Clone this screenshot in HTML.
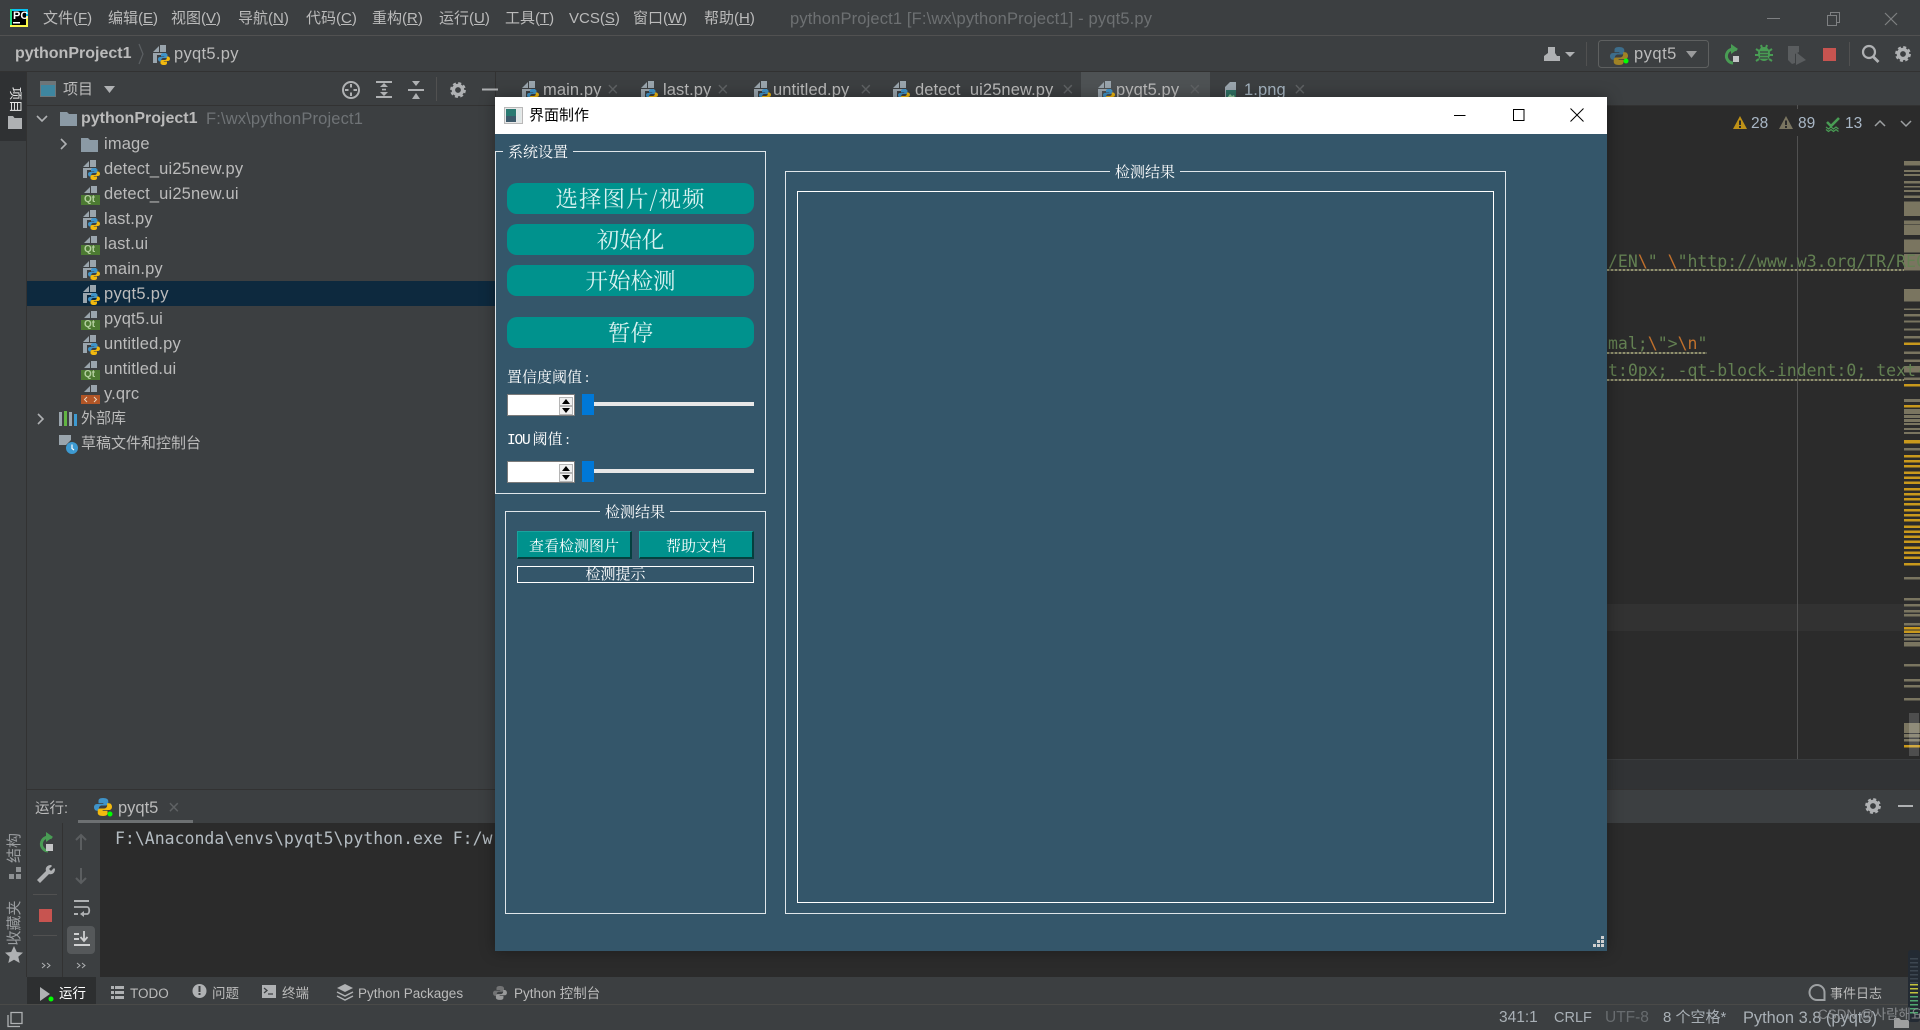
<!DOCTYPE html>
<html lang="zh">
<head>
<meta charset="utf-8">
<title>pyqt5.py</title>
<style>
html,body{margin:0;padding:0;width:1920px;height:1030px;overflow:hidden;background:#3c3f41}
body{position:relative;font-family:"Liberation Sans","Noto Sans CJK SC",sans-serif;color:#bbb}
.b{position:absolute}
.t{position:absolute;white-space:nowrap;line-height:20px;height:20px}
u{text-decoration:underline;text-underline-offset:1px}
.m{font-size:15px;top:9px}
.tree{font-size:16.5px;letter-spacing:.15px;left:104px}
.tab{font-size:16.5px;top:80px;letter-spacing:.1px}
.x{font-size:20px;top:80px;color:#5f6264;font-weight:normal}
.bt{font-size:13.5px;top:984px}
.st{font-size:15.5px;top:1008px;color:#a9b0b6}
.code{font-family:"DejaVu Sans Mono","Liberation Mono",monospace;font-size:16.5px;color:#638052;left:1608px}
.code i{font-style:normal;color:#c0702c}
.wave{position:absolute;height:2px;background:repeating-linear-gradient(90deg,#92926e 0 2px,#55554a 2px 4px)}
#win{position:absolute;left:495px;top:97px;width:1112px;height:854px;background:#34566a;box-shadow:0 0 14px rgba(0,0,0,.35);z-index:5;font-family:"Liberation Serif","Noto Serif CJK SC",serif;color:#fff}
#win .g{position:absolute;border:1px solid #dfe6ea;box-sizing:border-box}
#win .lg{position:absolute;background:#34566a;font-size:15px;line-height:20px;height:20px;padding:0 5px;white-space:nowrap;font-family:"Noto Serif CJK SC",serif;text-align:center}
#win .pb{position:absolute;left:12px;width:247px;height:31px;border-radius:10px;background:#00928d;color:#d8f2f0;font-size:22.5px;line-height:30px;text-align:center;font-family:"Noto Serif CJK SC",serif;white-space:nowrap}
#win .qb{position:absolute;top:434px;height:28px;box-sizing:border-box;width:115px;background:#00928d;border:1px solid #1aa39e;border-right:2px solid #05403f;border-bottom:2px solid #05403f;font-size:15px;line-height:27px;text-align:center;font-family:"Noto Serif CJK SC",serif}
#win .lb{position:absolute;left:12px;font-size:15px;line-height:20px;white-space:nowrap;font-family:"Liberation Serif","Noto Serif CJK SC",serif}
#win .lb em{font-style:normal;margin-left:3px}
#win .lb tt{font-family:"Liberation Mono",monospace;font-size:14.5px;letter-spacing:-1.2px;margin-right:3px}
#win .sp{position:absolute;left:12px;width:68px;height:22px;box-sizing:border-box;background:#fff;border:1px solid #7a7a7a}
#win .sp b{position:absolute;left:51px;width:14px;height:9px;background:#f0f0f0;border:1px solid #b5b5b5;box-sizing:border-box}
#win .sp b:after{content:"";position:absolute;left:2px;width:0;height:0;border-left:4px solid transparent;border-right:4px solid transparent}
#win .sp b.u:after{top:1px;border-bottom:5px solid #000}
#win .sp b.d:after{top:1px;border-top:5px solid #000}
#win .hd{position:absolute;left:87px;width:12px;height:21px;background:#0078d7}
#win .tr{position:absolute;left:99px;width:160px;height:4px;background:#e7e7e7}
</style>
</head>
<body>
<!-- IDE zones -->
<div class="b" style="left:0;top:0;width:1920px;height:36px;background:#3c3f41;border-bottom:1px solid #515151;box-sizing:border-box"></div>
<div class="b" style="left:0;top:71px;width:1920px;height:1px;background:#323232"></div>
<div class="b" style="left:0;top:72px;width:27px;height:69px;background:#2f3133"></div>
<div class="b" style="left:26px;top:72px;width:1px;height:905px;background:#323232"></div>
<div class="b" style="left:27px;top:105px;width:1893px;height:1px;background:#323232"></div>
<div class="b" style="left:495px;top:72px;width:1px;height:718px;background:#323232"></div>
<div class="b" style="left:496px;top:106px;width:1424px;height:653px;background:#2b2b2b"></div>
<div class="b" style="left:1081px;top:72px;width:129px;height:33px;background:#4e5254"></div>
<div class="b" style="left:496px;top:604px;width:1424px;height:27px;background:#323232"></div>
<div class="b" style="left:1797px;top:136px;width:1px;height:623px;background:#515151"></div>
<div class="b" style="left:1797px;top:105px;width:1px;height:4px;background:#515151"></div>
<div class="b" style="left:496px;top:759px;width:1424px;height:31px;background:#313335;border-top:1px solid #3a3c3e;box-sizing:border-box"></div>
<div class="b" style="left:27px;top:281px;width:468px;height:25px;background:#0d293e"></div>
<div class="b" style="left:27px;top:789px;width:1893px;height:1px;background:#323232"></div>
<div class="b" style="left:27px;top:823px;width:1893px;height:154px;background:#2b2b2b"></div>
<div class="b" style="left:27px;top:823px;width:73px;height:154px;background:#3c3f41"></div>
<div class="b" style="left:62px;top:823px;width:1px;height:154px;background:#323232"></div>
<div class="b" style="left:78px;top:820px;width:115px;height:3px;background:#6d7072"></div>
<div class="b" style="left:0;top:977px;width:1920px;height:27px;background:#3c3f41"></div>
<div class="b" style="left:27px;top:977px;width:69px;height:27px;background:#2d2f30"></div>
<div class="b" style="left:0;top:1004px;width:1920px;height:1px;background:#4a4a48"></div>
<div class="b" style="left:67px;top:926px;width:28px;height:28px;background:#55585a;border-radius:4px"></div>
<div class="b" style="left:33px;top:894px;width:24px;height:1px;background:#515151"></div>
<div class="b" style="left:33px;top:935px;width:24px;height:1px;background:#515151"></div>

<!-- Icons -->
<svg class="b" style="left:0;top:0" width="1920" height="1030" viewBox="0 0 1920 1030" xmlns="http://www.w3.org/2000/svg">
<defs>
<g id="logo"><path fill="#3f93c8" d="M12 0C7 0 6 2 6 4v3h6.500v1H4C1.500 8 0 10 0 12.200 0 14.800 1.500 17 4 17h2.500v-3.200c0-2 1.700-3.800 3.800-3.800h5.600c1.800 0 3.100-1.400 3.100-3.100V4c0-2-2-4-7-4z"/><path fill="#f2b90f" transform="rotate(180 12 12)" d="M12 0C7 0 6 2 6 4v3h6.500v1H4C1.500 8 0 10 0 12.200 0 14.800 1.500 17 4 17h2.500v-3.200c0-2 1.700-3.800 3.800-3.800h5.600c1.800 0 3.100-1.400 3.100-3.100V4c0-2-2-4-7-4z"/></g>
<g id="py"><path fill="#9aa5ad" d="M0 7l6-6v6zM7 0h6v7H7zM0 8h4v10H0z"/><rect x="4" y="8" width="9" height="2" fill="#9aa5ad"/><use href="#logo" transform="translate(5 8) scale(.5)"/></g>
<g id="doc"><path fill="#9aa5ad" d="M3 8l6-6v6zM10 1h6v7h-6z"/></g>
<g id="gear"><circle cx="0" cy="0" r="4.600" fill="none" stroke="#afb1b3" stroke-width="3.400"/><circle cx="0" cy="0" r="6.800" fill="none" stroke="#afb1b3" stroke-width="2.200" stroke-dasharray="3 2.340"/></g>
<g id="fold"><path fill="#8b9aa5" d="M0 1h7l2 2h8v12H0z"/></g>
<path id="chev" fill="none" stroke="#afb1b3" stroke-width="1.600" d="M-3-5l5 5-5 5"/>
</defs>

<!-- PC logo -->
<rect x="10" y="9" width="18" height="18" fill="#000"/>
<path fill="#21d789" d="M10 9h2v18h-2z"/><path fill="#fcf84a" d="M10 25h18v2H10zM26 16h2v11h-2z"/><path fill="#07c3f2" d="M12 9h16v2H12zM26 9h2v7h-2z"/>
<rect x="13" y="22" width="7" height="1.500" fill="#fff"/>

<!-- breadcrumb chevron -->
<path fill="none" stroke="#5c6063" stroke-width="1.200" d="M139 44l4 10-4 10"/>
<use href="#py" transform="translate(153 45)"/>

<!-- project header icons -->
<rect x="40" y="81" width="16" height="16" fill="#6e7578"/><rect x="41" y="85" width="14" height="11" fill="#3e86a0"/>
<path fill="#afb1b3" d="M104 86h11l-5.500 7z"/>
<circle cx="351" cy="90" r="8" fill="none" stroke="#afb1b3" stroke-width="2"/><path stroke="#afb1b3" stroke-width="2" d="M351 84v3.500M351 92.500v3.500M345 90h3.500M353.500 90h3.500"/>
<path fill="#afb1b3" d="M376 81h16v2h-16zM376 96h16v2h-16zM380 87l4-4 4 4zM380 92l4 4 4-4zM382 88.800h4v1.600h-4z"/>
<path fill="#afb1b3" d="M408 89h16v2h-16zM412 81l4 5 4-5zM412 99l4-6 4 6z"/>
<rect x="436" y="77" width="1" height="24" fill="#515151"/>
<use href="#gear" transform="translate(458 90)"/>
<rect x="482" y="88.500" width="16" height="2" fill="#afb1b3"/>

<!-- side tool strip -->
<path fill="#afb1b3" d="M8 116h5l1.500 2H22v11H8z"/>
<path fill="#8e9193" d="M16 867h5v5h-5zM9 874h5v5H9zM16 874h5v5h-5z"/>
<path fill="#afb1b3" d="M14 946l2.800 6 6.200.6-4.700 4.200 1.400 6.200-5.700-3.300-5.700 3.300 1.400-6.200L5 952.600l6.200-.6z"/>

<!-- tab icons -->
<use href="#py" transform="translate(522 81)"/>
<use href="#py" transform="translate(641 81)"/>
<use href="#py" transform="translate(754 81)"/>
<use href="#py" transform="translate(893 81)"/>
<use href="#py" transform="translate(1098 81)"/>
<path fill="#9aa5ad" d="M1225 87l5-5h6v17h-11z"/><rect x="1226" y="90" width="10" height="9" fill="#2e6f62"/><path fill="#8fc89a" d="M1227 98l3-4 2 2 2-1 1 3z"/>

<!-- tree icons -->
<use href="#chev" transform="translate(42 119) rotate(90)"/>
<use href="#chev" transform="translate(64 144)"/>
<use href="#chev" transform="translate(41 419)"/>
<use href="#fold" transform="translate(60 111)"/>
<use href="#fold" transform="translate(81 137)"/>
<use href="#py" transform="translate(83 160)"/>
<use href="#doc" transform="translate(81 185)"/><rect x="81" y="195" width="19" height="10" fill="#4c7a32"/>
<use href="#py" transform="translate(83 210)"/>
<use href="#doc" transform="translate(81 235)"/><rect x="81" y="245" width="19" height="10" fill="#4c7a32"/>
<use href="#py" transform="translate(83 260)"/>
<use href="#py" transform="translate(83 285)"/>
<use href="#doc" transform="translate(81 310)"/><rect x="81" y="320" width="19" height="10" fill="#4c7a32"/>
<use href="#py" transform="translate(83 335)"/>
<use href="#doc" transform="translate(81 360)"/><rect x="81" y="370" width="19" height="10" fill="#4c7a32"/>
<use href="#doc" transform="translate(81 384)"/><rect x="81" y="395" width="19" height="9" fill="#b15526"/>
<path fill="none" stroke="#e9d5c0" stroke-width="1" d="M87 397l-2.500 2.500 2.500 2.500M94 397l2.500 2.500-2.500 2.500"/>
<path fill="#9aa5ad" d="M59 412h3v14h-3zM69 412h3v14h-3z"/><path fill="#62b543" d="M64 411h3v15h-3z"/><path fill="#3d9ad1" d="M74 414h3v12h-3z"/>
<path fill="#9aa5ad" d="M59 435h12v5l-5 5h-7z"/><circle cx="72" cy="448" r="6" fill="#3d9ad1"/><path stroke="#fff" stroke-width="1.200" fill="none" d="M72 444.500v4l2 1.500"/>

<!-- toolbar right -->
<path fill="#afb1b3" d="M1548 47h7v6l2 3h3v5h-16v-5l4-3z"/><path fill="#afb1b3" d="M1565 52h10l-5 5z"/>
<rect x="1586" y="42" width="1" height="24" fill="#515151"/>
<rect x="1598.500" y="40.500" width="110" height="27" rx="3" fill="none" stroke="#5e6060"/>
<g opacity=".55"><use href="#logo" transform="translate(1610 47) scale(.75)"/></g><circle cx="1626" cy="61" r="2.500" fill="#0f0"/>
<path fill="#9a9b9c" d="M1686 51h11l-5.500 7z"/>
<path fill="none" stroke="#499c54" stroke-width="3" d="M1737 50a7 7 0 1 0-4 13"/><path fill="#499c54" d="M1731 44v10l7-5z"/><rect x="1733" y="56" width="6" height="6" fill="#c4c5c6"/>
<ellipse cx="1764" cy="54" rx="6" ry="7" fill="#499c54"/><path stroke="#499c54" stroke-width="2" d="M1756 49l3 2M1772 49l-3 2M1755 55h4M1769 55h4M1756 61l3-2M1772 61l-3-2M1761 45l1 3M1767 45l-1 3"/><path stroke="#3c3f41" stroke-width="1.200" d="M1760 52h8M1760 55h8M1760 58h8"/>
<path fill="#5a5d5f" d="M1788 46h11v6l-4 2v9l-3 1-4-4z"/><path fill="#5a5d5f" d="M1796 52l10 8-10 5z"/>
<rect x="1823" y="48" width="13" height="13" fill="#c75450"/>
<rect x="1849" y="42" width="1" height="24" fill="#515151"/>
<circle cx="1869" cy="52" r="6" fill="none" stroke="#afb1b3" stroke-width="2.200"/><path stroke="#afb1b3" stroke-width="2.800" d="M1873.500 57l5 5"/>
<use href="#gear" transform="translate(1903 54)"/>

<!-- title bar controls -->
<rect x="1767" y="18" width="13" height="1" fill="#7e8082"/>
<path fill="none" stroke="#7e8082" d="M1827.500 15.500h9v10h-9zM1830.500 15.500v-3h9v10h-3"/>
<path stroke="#7e8082" stroke-width="1.200" d="M1885 13l12 12M1897 13l-12 12"/>

<!-- inspection widget -->
<path fill="#be9117" d="M1733 129l7-13 7 13z"/><rect x="1739" y="120.500" width="2" height="4.500" fill="#2b2b2b"/><rect x="1739" y="126" width="2" height="2" fill="#2b2b2b"/>
<path fill="#7a7560" d="M1779 129l7-13 7 13z"/><rect x="1785" y="120.500" width="2" height="4.500" fill="#2b2b2b"/><rect x="1785" y="126" width="2" height="2" fill="#2b2b2b"/>
<path fill="none" stroke="#499c54" stroke-width="2.600" d="M1827 122l4 4 8-8"/><path fill="none" stroke="#499c54" stroke-width="1.200" d="M1826 127l2.500 2 2.500-2 2.500 2 2.500-2 2.500 2M1826 129.500l2.500 2 2.500-2 2.500 2 2.500-2 2.500 2"/>
<path fill="none" stroke="#9da0a2" stroke-width="1.500" d="M1875 126l5-5 5 5M1901 121l5 5 5-5"/>

<!-- error stripe -->
<path fill="#7a7560" d="M1904 161h16v4.500h-16zM1904 170h16v2h-16zM1904 174h16v2h-16zM1904 181h16v2.500h-16zM1904 186h16v1.500h-16zM1904 190h16v2h-16zM1904 195.500h16v2.500h-16zM1904 201.500h16v14.500h-16zM1904 220.500h16v4h-16zM1904 225h16v10h-16zM1904 239.500h16v13h-16zM1904 254h16v16.500h-16zM1904 289h16v12.500h-16zM1904 308.500h16v1.500h-16zM1904 314h16v2.500h-16zM1904 320.500h16v2h-16zM1904 328.500h16v2h-16zM1904 336h16v2.500h-16zM1904 351.500h16v2.500h-16zM1904 359.500h16v2.500h-16zM1904 366h16v6.500h-16zM1904 377.500h16v2.500h-16zM1904 399h16v3h-16zM1904 409h16v5h-16zM1904 415h16v3h-16zM1904 419h16v3h-16zM1904 423h16v2h-16zM1904 428h16v2h-16zM1904 432h16v2h-16zM1904 448h16v2.500h-16zM1904 577h16v2.500h-16zM1904 598h16v2.500h-16zM1904 604h16v2.500h-16zM1904 610h16v2.500h-16zM1904 614h16v2.500h-16zM1904 623h16v2.500h-16zM1904 634h16v2.500h-16zM1904 638h16v2.500h-16zM1904 642h16v4.500h-16zM1904 664h16v2.500h-16zM1904 679h16v2.500h-16zM1904 685h16v2.500h-16zM1904 698h16v2.500h-16zM1904 723h16v10h-16zM1904 734h16v3.500h-16zM1904 739h16v2.500h-16z"/>
<path fill="#c9991c" d="M1904 342.500h16v2.500h-16zM1904 384h16v2.500h-16zM1904 405h16v2.500h-16zM1904 440h16v3.500h-16zM1904 455h16v2.500h-16zM1904 460h16v2.500h-16zM1904 465h16v2.500h-16zM1904 471.500h16v2.500h-16zM1904 476.500h16v2.500h-16zM1904 481.500h16v2.500h-16zM1904 488h16v2.500h-16zM1904 493h16v2.500h-16zM1904 498h16v2.500h-16zM1904 503h16v2.500h-16zM1904 509h16v2.500h-16zM1904 514h16v2.500h-16zM1904 519h16v2.500h-16zM1904 525.500h16v2.500h-16zM1904 530.500h16v2.500h-16zM1904 535.500h16v2.500h-16zM1904 540.500h16v2.500h-16zM1904 546.500h16v2.500h-16zM1904 551.500h16v2.500h-16zM1904 556.500h16v2.500h-16zM1904 563h16v2.500h-16zM1904 627h16v2.500h-16zM1904 630.500h16v2.500h-16zM1904 745h16v2.500h-16z"/>
<rect x="1909" y="713" width="10" height="43" fill="#fff" opacity=".17"/>

<!-- bottom panel icons -->
<use href="#logo" transform="translate(94 798) scale(.75)"/><circle cx="110" cy="814" r="2.500" fill="#0f0"/>
<use href="#gear" transform="translate(1873 806)"/>
<rect x="1898" y="805" width="15" height="2" fill="#afb1b3"/>
<!-- run column -->
<path fill="none" stroke="#499c54" stroke-width="3" d="M52 838a7 7 0 1 0-4 13"/><path fill="#499c54" d="M46 832v10l7-5z"/><rect x="46" y="844" width="7" height="7" fill="#c4c5c6"/>
<path fill="#afb1b3" d="M37 880l9-9c-1-3 1-6 5-6l1 1-3 3 2 2 3-3 1 1c0 4-3 6-6 5l-9 9z"/>
<rect x="39" y="909" width="13" height="13" fill="#c75450"/>
<path fill="none" stroke="#afb1b3" d="M42 963l3 2.500-3 2.500M47 963l3 2.500-3 2.500M77 963l3 2.500-3 2.500M82 963l3 2.500-3 2.500"/>
<path fill="none" stroke="#5b5e60" stroke-width="2" d="M81 850v-15M76 840l5-5 5 5M81 868v15M76 878l5 5 5-5"/>
<path fill="#afb1b3" d="M74 900h15v2H74zM74 913h4v2h-4z"/><path fill="none" stroke="#afb1b3" stroke-width="1.800" d="M74 907h13c3 0 3 7 0 7h-4"/><path fill="#afb1b3" d="M84 911v6l-4-3z"/>
<path fill="#cfd0d1" d="M74 933h5v2h-5zM74 938h5v2h-5zM74 944h16v2H74z"/><path fill="none" stroke="#cfd0d1" stroke-width="1.800" d="M84 931v10M80.500 937l3.500 4 3.500-4"/>

<!-- bottom strip icons -->
<path fill="#afb1b3" d="M40 987l10 7-10 7z"/><circle cx="51" cy="999" r="2.500" fill="#0f0"/>
<path fill="#afb1b3" d="M111 986h3v3h-3zM115 986h9v3h-9zM111 991h3v3h-3zM115 991h9v3h-9zM111 996h3v3h-3zM115 996h9v3h-9z"/>
<circle cx="199.500" cy="991" r="7" fill="#afb1b3"/><rect x="198.500" y="986" width="2" height="6" fill="#3c3f41"/><rect x="198.500" y="993" width="2" height="2" fill="#3c3f41"/>
<rect x="262" y="985" width="14" height="13" fill="#afb1b3"/><path fill="none" stroke="#3c3f41" stroke-width="1.300" d="M264 988l3 2.500-3 2.500M268 994h5"/>
<path fill="#afb1b3" d="M345 984l8 4-8 4-8-4z"/><path fill="none" stroke="#afb1b3" stroke-width="1.500" d="M337 992l8 4 8-4M337 996l8 4 8-4"/>
<g style="filter:grayscale(1)" opacity=".75"><use href="#logo" transform="translate(493 986) scale(.58)"/></g>
<path fill="none" stroke="#9da0a2" stroke-width="2" d="M1824.500 1000h-7.500a7.500 7.500 0 1 1 7.500-7.500z"/>
<!-- status -->
<path fill="none" stroke="#afb1b3" stroke-width="1.300" d="M11 1012.500h11v11H11zM8 1015v11.500h12"/>
<path fill="#b0b1b2" d="M1894 1018h5l2 2h8v8h-15z" opacity=".85"/>
<rect x="1908" y="950" width="12" height="72" rx="3" fill="#232a33"/>
<path fill="#3c4650" d="M1910 958h8v1.500h-8zM1910 962h8v1.500h-8zM1910 966h8v1.500h-8zM1910 970h8v1.500h-8zM1910 974h8v1.500h-8zM1910 978h8v1.500h-8zM1910 982h8v1.500h-8z"/>
<path fill="#c2c23c" d="M1910 984h8v1.500h-8zM1910 988h8v1.500h-8zM1910 992h8v1.500h-8z"/>
<path fill="#4fa870" d="M1910 996h8v1.500h-8zM1910 1000h8v1.500h-8zM1910 1004h8v1.500h-8zM1910 1008h8v1.500h-8zM1910 1012h8v1.500h-8z"/>
</svg>

<span class="t" style="left:13px;top:11px;font-size:11px;line-height:11px;height:11px;color:#fff;font-weight:bold">PC</span>

<!-- Menu -->
<span class="t m" style="left:43px">文件(<u>F</u>)</span>
<span class="t m" style="left:108px">编辑(<u>E</u>)</span>
<span class="t m" style="left:171px">视图(<u>V</u>)</span>
<span class="t m" style="left:238px">导航(<u>N</u>)</span>
<span class="t m" style="left:306px">代码(<u>C</u>)</span>
<span class="t m" style="left:372px">重构(<u>R</u>)</span>
<span class="t m" style="left:439px">运行(<u>U</u>)</span>
<span class="t m" style="left:505px">工具(<u>T</u>)</span>
<span class="t m" style="left:569px">VCS(<u>S</u>)</span>
<span class="t m" style="left:633px">窗口(<u>W</u>)</span>
<span class="t m" style="left:704px">帮助(<u>H</u>)</span>
<span class="t m" style="left:790px;color:#6d7072;font-size:16.5px;letter-spacing:.15px">pythonProject1 [F:\wx\pythonProject1] - pyqt5.py</span>

<!-- Breadcrumb -->
<span class="t" style="left:15px;top:44px;font-size:16px;font-weight:bold">pythonProject1</span>
<span class="t" style="left:174px;top:44px;font-size:16.5px;letter-spacing:.3px">pyqt5.py</span>
<span class="t" style="left:1634px;top:44px;font-size:16.5px;letter-spacing:.5px">pyqt5</span>

<!-- Side strip text -->
<span class="t" style="left:5px;top:87px;font-size:13px;color:#e6e6e6;transform:rotate(90deg);width:20px;text-align:center">项目</span>
<span class="t" style="left:0;top:838px;font-size:15px;color:#9a9da0;transform:rotate(-90deg);width:30px;text-align:center">结构</span>
<span class="t" style="left:-10px;top:913px;font-size:15px;color:#9a9da0;transform:rotate(-90deg);width:50px;text-align:center">收藏夹</span>

<!-- Project panel -->
<span class="t" style="left:63px;top:80px;font-size:15px">项目</span>
<span class="t" style="left:81px;top:109px;font-size:16px;font-weight:bold">pythonProject1</span>
<span class="t" style="left:206px;top:109px;font-size:16.5px;letter-spacing:.15px;color:#6f7376">F:\wx\pythonProject1</span>
<span class="t tree" style="top:134px">image</span>
<span class="t tree" style="top:159px">detect_ui25new.py</span>
<span class="t tree" style="top:184px">detect_ui25new.ui</span>
<span class="t tree" style="top:209px">last.py</span>
<span class="t tree" style="top:234px">last.ui</span>
<span class="t tree" style="top:259px">main.py</span>
<span class="t tree" style="top:284px;letter-spacing:.3px">pyqt5.py</span>
<span class="t tree" style="top:309px">pyqt5.ui</span>
<span class="t tree" style="top:334px">untitled.py</span>
<span class="t tree" style="top:359px">untitled.ui</span>
<span class="t tree" style="top:384px">y.qrc</span>
<span class="t" style="left:81px;top:409px;font-size:15px">外部库</span>
<span class="t" style="left:81px;top:434px;font-size:15px">草稿文件和控制台</span>
<span class="t" style="left:84px;top:195px;font-size:10px;line-height:10px;height:10px;color:#b4d0a0;font-weight:bold">Qt</span>
<span class="t" style="left:84px;top:245px;font-size:10px;line-height:10px;height:10px;color:#b4d0a0;font-weight:bold">Qt</span>
<span class="t" style="left:84px;top:320px;font-size:10px;line-height:10px;height:10px;color:#b4d0a0;font-weight:bold">Qt</span>
<span class="t" style="left:84px;top:370px;font-size:10px;line-height:10px;height:10px;color:#b4d0a0;font-weight:bold">Qt</span>

<!-- Tabs -->
<span class="t tab" style="left:543px">main.py</span><span class="t x" style="left:607px">×</span>
<span class="t tab" style="left:663px">last.py</span><span class="t x" style="left:717px">×</span>
<span class="t tab" style="left:773px">untitled.py</span><span class="t x" style="left:860px">×</span>
<span class="t tab" style="left:915px">detect_ui25new.py</span><span class="t x" style="left:1062px">×</span>
<span class="t tab" style="left:1116px">pyqt5.py</span><span class="t x" style="left:1189px">×</span>
<span class="t tab" style="left:1244px;color:#a5b4c0">1.png</span><span class="t x" style="left:1294px">×</span>

<!-- Inspection -->
<span class="t" style="left:1751px;top:114px;font-size:15.5px;color:#a9b7c6">28</span>
<span class="t" style="left:1798px;top:114px;font-size:15.5px;color:#a9b7c6">89</span>
<span class="t" style="left:1845px;top:114px;font-size:15.5px;color:#a9b7c6">13</span>

<!-- Code -->
<span class="t code" style="top:252px">/EN<i>\</i>" <i>\</i>"http://www.w3.org/TR/REC</span>
<div class="wave" style="left:1607px;top:269px;width:297px"></div>
<span class="t code" style="top:334px">mal;<i>\</i>"&gt;<i>\n</i>"</span>
<div class="wave" style="left:1607px;top:352px;width:100px"></div>
<span class="t code" style="top:361px">t:0px; -qt-block-indent:0; text-</span>
<div class="wave" style="left:1607px;top:379px;width:297px"></div>

<!-- Run panel -->
<span class="t" style="left:35px;top:799px;font-size:14.5px">运行:</span>
<span class="t" style="left:118px;top:798px;font-size:16.5px">pyqt5</span>
<span class="t" style="left:168px;top:798px;font-size:20px;color:#5f6264">×</span>
<span class="t" style="left:115px;top:829px;font-family:'DejaVu Sans Mono','Liberation Mono',monospace;font-size:16.5px;color:#b4bcc2">F:\Anaconda\envs\pyqt5\python.exe F:/w</span>

<!-- Bottom strip -->
<span class="t bt" style="left:59px;color:#fff">运行</span>
<span class="t bt" style="left:130px">TODO</span>
<span class="t bt" style="left:212px">问题</span>
<span class="t bt" style="left:282px">终端</span>
<span class="t bt" style="left:358px">Python Packages</span>
<span class="t bt" style="left:514px">Python 控制台</span>
<span class="t bt" style="left:1830px;font-size:13px">事件日志</span>

<!-- Status -->
<span class="t st" style="left:1499px">341:1</span>
<span class="t st" style="left:1554px;font-size:14.5px">CRLF</span>
<span class="t st" style="left:1605px;color:#686c6f">UTF-8</span>
<span class="t st" style="left:1663px;font-size:15px">8 个空格*</span>
<span class="t st" style="left:1743px;font-size:16.4px">Python 3.8 (pyqt5)</span>
<span class="t" style="left:1818px;top:1005px;font-size:13.5px;color:#8f9295;opacity:.9;font-family:'Liberation Sans','Noto Sans CJK KR',sans-serif">CSDN @사람해요</span>

<!-- PyQt window -->
<div id="win">
  <div class="b" style="left:0;top:0;width:1112px;height:37px;background:#fff"></div>
  <svg class="b" style="left:9px;top:10px" width="19" height="17" viewBox="0 0 19 17"><rect x=".5" y=".5" width="18" height="16" fill="#e8e8e8" stroke="#b8b8b8"/><rect x="2" y="2" width="10" height="13" fill="#2a7a72"/><rect x="13" y="2" width="4" height="13" fill="#dfe8e8"/><rect x="2" y="9" width="10" height="6" fill="#3d5a6b"/></svg>
  <span class="t" style="left:34px;top:8px;font-size:15px;color:#000;font-family:'Noto Sans CJK SC',sans-serif">界面制作</span>
  <svg class="b" style="left:955px;top:8px" width="140" height="20" viewBox="0 0 140 20"><path stroke="#000" stroke-width="1" d="M4 10.500h11.500M63.500 4.500h10.500v11H63.500zM120.500 3.500l13 13M133.500 3.500l-13 13" fill="none"/></svg>

  <div class="g" style="left:0;top:54px;width:271px;height:343px"></div>
  <div class="lg" style="left:8px;top:45px">系统设置</div>
  <div class="pb" style="top:86px;letter-spacing:1px">选择图片/视频</div>
  <div class="pb" style="top:127px">初始化</div>
  <div class="pb" style="top:168px">开始检测</div>
  <div class="pb" style="top:220px">暂停</div>
  <div class="lb" style="top:271px">置信度阈值<em>:</em></div>
  <div class="sp" style="top:297px"><b class="u" style="top:2px"></b><b class="d" style="top:11px"></b></div>
  <div class="hd" style="top:297px"></div><div class="tr" style="top:305px"></div>
  <div class="lb" style="top:333px"><tt>IOU</tt>阈值<em>:</em></div>
  <div class="sp" style="top:364px"><b class="u" style="top:2px"></b><b class="d" style="top:11px"></b></div>
  <div class="hd" style="top:364px"></div><div class="tr" style="top:372px"></div>

  <div class="g" style="left:10px;top:414px;width:261px;height:403px"></div>
  <div class="lg" style="left:105px;top:405px">检测结果</div>
  <div class="qb" style="left:22px">查看检测图片</div>
  <div class="qb" style="left:144px">帮助文档</div>
  <div class="b" style="left:22px;top:469px;width:237px;height:17px;box-sizing:border-box;border:1.500px solid #fff;font-size:15px;line-height:14px;text-align:center;font-family:'Noto Serif CJK SC',serif"><span style="position:relative;left:-20px">检测提示</span></div>

  <div class="g" style="left:290px;top:74px;width:721px;height:743px"></div>
  <div class="lg" style="left:615px;top:65px">检测结果</div>
  <div class="g" style="left:302px;top:94px;width:697px;height:712px;border-width:1.500px;border-color:#fff"></div>

  <svg class="b" style="left:1098px;top:838px" width="12" height="12" viewBox="0 0 12 12"><path fill="#d0d0d0" d="M8 1h3v3H8zM4 5h3v3H4zM8 5h3v3H8zM0 9h3v3H0zM4 9h3v3H4zM8 9h3v3H8z"/></svg>
</div>
</body>
</html>
